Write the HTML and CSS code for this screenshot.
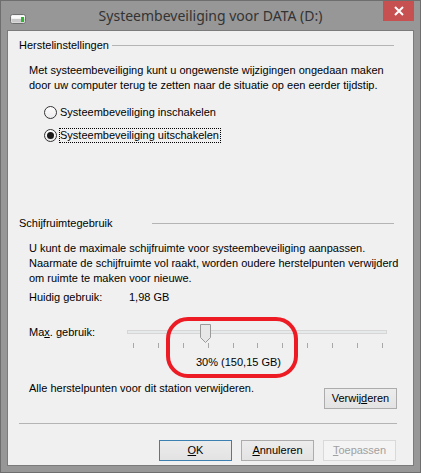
FILE: index.html
```html
<!DOCTYPE html>
<html lang="nl">
  <head>
    <meta charset="UTF-8" />
    <title>Systeembeveiliging voor DATA (D:)</title>
    <link rel="stylesheet" href="styles.css">
  </head>
  <body>
    <div class="window">
      <!-- Title bar -->
      <div class="titlebar">
        <svg class="drive-icon" width="16" height="10" viewBox="0 0 16 10">
          <rect x="0.5" y="0.5" width="15" height="9" rx="2" fill="#e9e9e9" stroke="#6f6f6f" />
          <rect x="1.5" y="1.5" width="13" height="3" rx="1" fill="#fbfbfb" />
          <rect x="1.5" y="5" width="13" height="3.5" fill="#c9c9c9" />
          <rect x="11" y="3" width="3" height="5" fill="#2fb52f" />
        </svg>
        <div class="title">Systeembeveiliging voor DATA (D:)</div>
        <div class="close">
          <svg width="10" height="10" viewBox="0 0 10 10">
            <path d="M1 1 L9 9 M9 1 L1 9" stroke="#fff" stroke-width="2" />
          </svg>
        </div>
      </div>

      <div class="client">
        <!-- Herstelinstellingen -->
        <div class="group-head">
          <span>Herstelinstellingen</span>
          <div class="group-line"></div>
        </div>
        <p class="group-text text-first">
          Met systeembeveiliging kunt u ongewenste wijzigingen ongedaan maken<br />
          door uw computer terug te zetten naar de situatie op een eerder tijdstip.
        </p>
        <div class="radios">
          <div class="radio">
            <span class="radio-box"></span>
            <span class="radio-label">Systeembeveiliging inschakelen</span>
          </div>
          <div class="radio">
            <span class="radio-box checked"></span>
            <span class="radio-label focused">Systeembeveiliging uitschakelen</span>
          </div>
        </div>

        <!-- Schijfruimtegebruik -->
        <div class="group-head head-second">
          <span class="head-wide">Schijfruimtegebruik</span>
          <div class="group-line"></div>
        </div>
        <p class="group-text text-second">
          U kunt de maximale schijfruimte voor systeembeveiliging aanpassen.<br />
          Naarmate de schijfruimte vol raakt, worden oudere herstelpunten verwijderd<br />
          om ruimte te maken voor nieuwe.
        </p>
        <div class="usage">
          <span>Huidig gebruik:</span>
          <span>1,98 GB</span>
        </div>
        <div class="max-row">
          <span class="max-label">Ma<u>x</u>. gebruik:</span>
          <div class="slider">
            <div class="track"></div>
            <svg class="thumb" width="11" height="19" viewBox="0 0 11 19">
              <path d="M0.5 0.5 H10.5 V13.5 L5.5 18.5 L0.5 13.5 Z" fill="#e7e7e7" stroke="#9a9a9a" />
            </svg>
            <div class="ticks">
              <i></i><i></i><i></i><i></i><i></i><i></i><i></i><i></i><i></i><i></i><i></i>
            </div>
          </div>
        </div>
        <div class="percent">30% (150,15 GB)</div>

        <div class="delete-row">
          <span>Alle herstelpunten voor dit station verwijderen.</span>
          <button class="btn delete-btn">Verwij<u>d</u>eren</button>
        </div>

        <div class="separator"></div>

        <div class="buttons">
          <button class="btn btn-default"><u>O</u>K</button>
          <button class="btn"><u>A</u>nnuleren</button>
          <button class="btn btn-disabled"><u>T</u>oepassen</button>
        </div>

        <!-- red marker drawn over the slider -->
        <div class="marker"></div>
      </div>
    </div>
  </body>
</html>
```

FILE: styles.css
```css
* {
  margin: 0;
  padding: 0;
  box-sizing: border-box;
}

body {
  font-family: "Liberation Sans", Arial, sans-serif;
  font-size: 11px;
  line-height: 15px;
  color: #000;
  background: #979797;
}

.window {
  width: 421px;
  height: 473px;
  background: #979797;
  border: 1px solid #6e6e6e;
  display: flex;
  flex-direction: column;
}

.titlebar {
  height: 29px;
  display: grid;
  grid-template-columns: 1fr auto 1fr;
}

.drive-icon {
  margin: 13px 0 0 9px;
}

.title {
  font-family: "Noto Sans", sans-serif;
  font-size: 14px;
  line-height: 20px;
  padding-top: 5px;
  color: #333;
}

.close {
  justify-self: end;
  width: 31px;
  height: 20px;
  margin-right: 6px;
  background: #c75050;
  display: flex;
  align-items: center;
  justify-content: center;
}

.client {
  position: relative;
  flex: 1;
  margin: 0 6px 6px 6px;
  border: 1px solid #7b7b7b;
  background: #f0f0f0;
  padding: 7px 16px 0 11px;
}

/* group headings */
.group-head {
  display: flex;
  align-items: center;
  height: 15px;
}

.group-head span {
  padding-right: 3px;
}

.head-wide {
  width: 133px;
}

.head-second {
  margin-top: 73px;
}

.group-line {
  flex: 1;
  height: 1px;
  background: #b4b4b4;
  margin-right: 3px;
}

.group-text {
  padding-left: 10px;
  white-space: nowrap;
}

.text-first {
  margin-top: 10px;
}

.text-second {
  margin-top: 10px;
}

/* radios */
.radios {
  margin-top: 12px;
  padding-left: 25px;
  display: flex;
  flex-direction: column;
  gap: 8px;
}

.radio {
  display: flex;
  align-items: center;
  height: 15px;
  gap: 2px;
}

.radio-box {
  width: 13px;
  height: 13px;
  border: 1px solid #333;
  border-radius: 50%;
  background: linear-gradient(#fdfdfd, #ececec);
  display: flex;
  align-items: center;
  justify-content: center;
}

.radio-box.checked::after {
  content: "";
  width: 7px;
  height: 7px;
  border-radius: 50%;
  background: #1a1a1a;
}

.radio-label {
  border: 1px dotted transparent;
  line-height: 13px;
  padding-right: 1px;
}

.radio-label.focused {
  border-color: #000;
}

/* usage */
.usage {
  margin-top: 4px;
  padding-left: 10px;
  display: grid;
  grid-template-columns: 100px auto;
}

.max-row {
  margin-top: 18px;
  padding-left: 10px;
  display: grid;
  grid-template-columns: 98px 260px;
}

.max-label {
  padding-top: 2px;
}

.slider {
  position: relative;
  height: 25px;
}

.track {
  margin-top: 7px;
  height: 4px;
  border: 1px solid #d6d6d6;
  background: #e7eaea;
}

.thumb {
  position: absolute;
  top: 1px;
  left: 73px;
}

.ticks {
  margin-top: 9px;
  padding: 0 4px 0 6px;
  display: flex;
  justify-content: space-between;
}

.ticks i {
  width: 1px;
  height: 5px;
  background: #a8a8a8;
}

.percent {
  margin-top: 7px;
  padding-left: 177px;
}

.delete-row {
  margin-top: 11px;
  padding-left: 10px;
  display: flex;
  justify-content: space-between;
  align-items: flex-start;
}

.btn {
  width: 73px;
  height: 21px;
  font-family: "Liberation Sans", Arial, sans-serif;
  font-size: 11px;
  line-height: 15px;
  color: #000;
  background: linear-gradient(#ececec, #e3e3e3);
  border: 1px solid #acacac;
}

.delete-btn {
  margin-top: 7px;
}

.separator {
  margin-top: 14px;
  height: 1px;
  background: #b4b4b4;
}

.buttons {
  margin-top: 16px;
  display: flex;
  justify-content: flex-end;
  gap: 9px;
  padding-right: 1px;
}

.btn-default {
  border-color: #3c7fb1;
}

.btn-disabled {
  color: #a0a0a0;
  background: #f4f4f4;
  border-color: #d9d9d9;
}

.marker {
  position: absolute;
  left: 158px;
  top: 286px;
  width: 132px;
  height: 61px;
  border: 4px solid #ed1c24;
  border-radius: 22px;
}
```
